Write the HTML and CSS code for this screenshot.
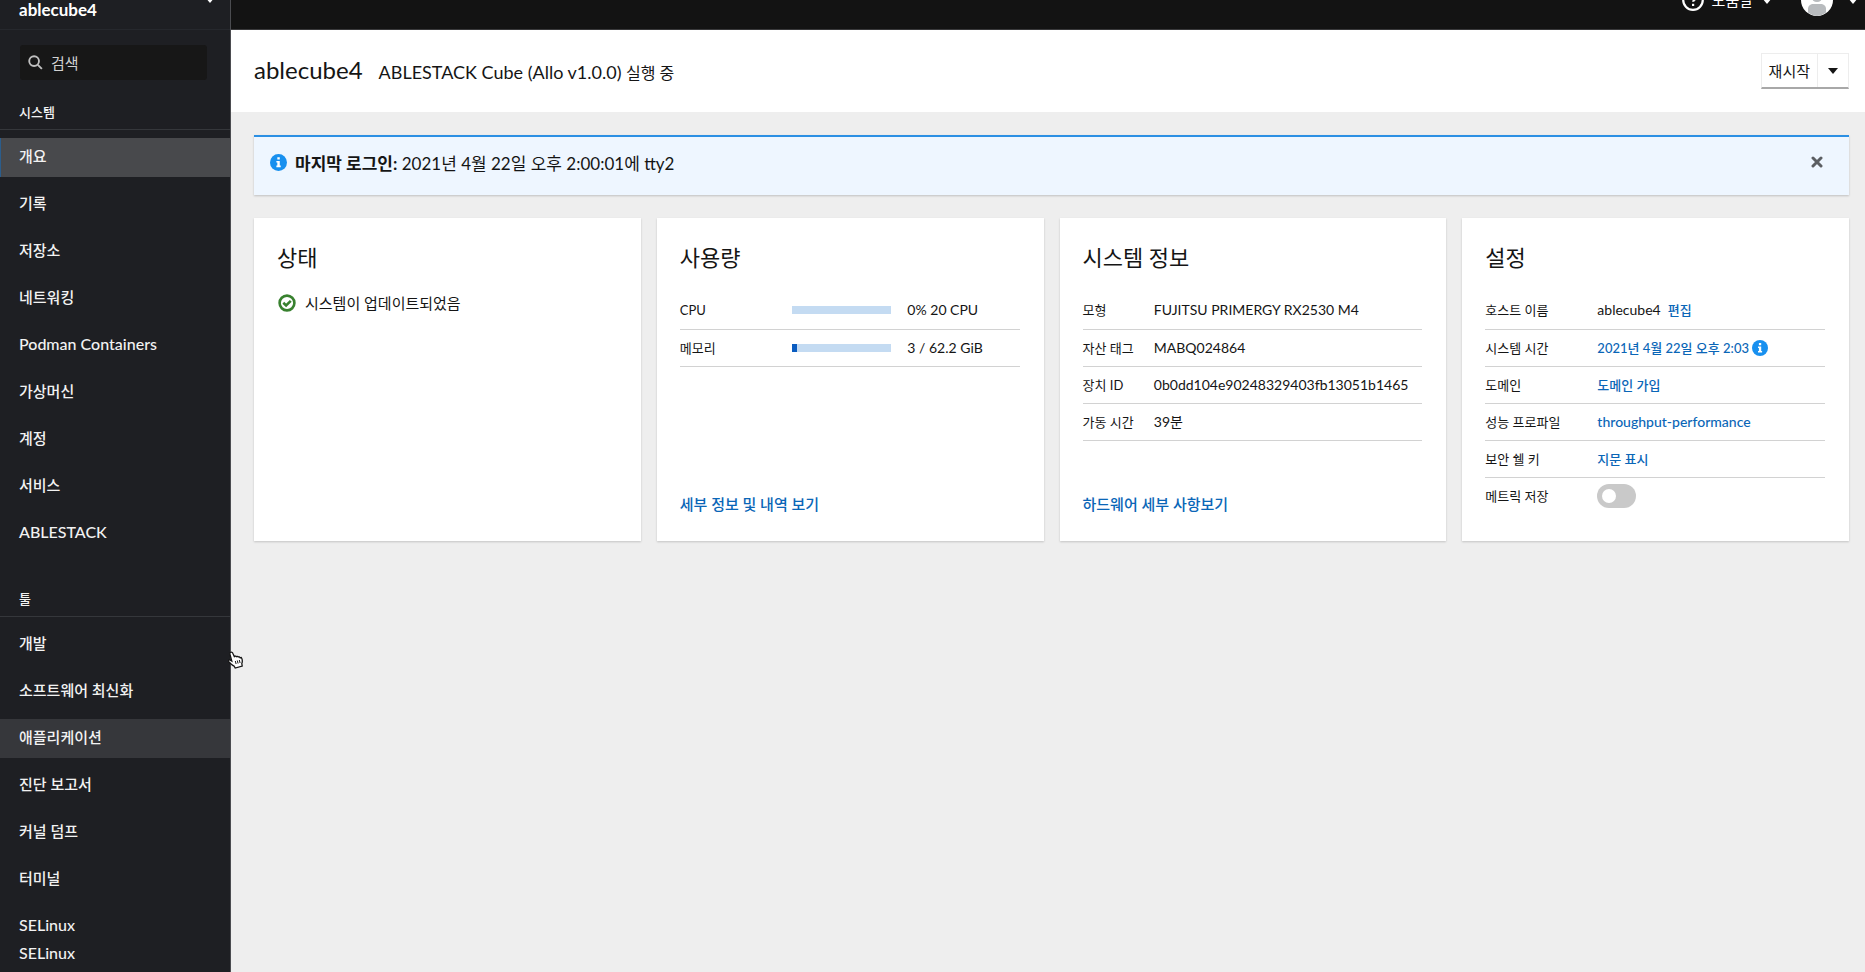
FILE: index.html
```html
<!DOCTYPE html>
<html lang="ko">
<head>
<meta charset="utf-8">
<title>개요 - ablecube4</title>
<link rel="stylesheet" href="styles.css">
</head>
<body>
<div class="page">
  <aside class="sidebar">
    <button class="host" type="button">
      <span>ablecube4</span>
      <svg class="caret host-caret" viewBox="0 0 10 6"><path d="M0 0h10L5 6z"/></svg>
    </button>
    <label class="search">
      <svg class="search-icon" viewBox="0 0 16 16"><circle cx="6.5" cy="6.5" r="5.2"/><path d="M10.5 10.5l4.3 4.3"/></svg>
      <input type="text" placeholder="검색" aria-label="검색">
    </label>
    <nav>
      <h2 class="nav-title">시스템</h2>
      <ul class="nav-list">
        <li><a class="nav-link current" href="#">개요</a></li>
        <li><a class="nav-link" href="#">기록</a></li>
        <li><a class="nav-link" href="#">저장소</a></li>
        <li><a class="nav-link" href="#">네트워킹</a></li>
        <li><a class="nav-link latin" href="#">Podman Containers</a></li>
        <li><a class="nav-link" href="#">가상머신</a></li>
        <li><a class="nav-link" href="#">계정</a></li>
        <li><a class="nav-link" href="#">서비스</a></li>
        <li><a class="nav-link latin" href="#">ABLESTACK</a></li>
      </ul>
      <h2 class="nav-title">툴</h2>
      <ul class="nav-list">
        <li><a class="nav-link" href="#">개발</a></li>
        <li><a class="nav-link" href="#">소프트웨어 최신화</a></li>
        <li><a class="nav-link hovered" href="#">애플리케이션</a></li>
        <li><a class="nav-link" href="#">진단 보고서</a></li>
        <li><a class="nav-link" href="#">커널 덤프</a></li>
        <li><a class="nav-link" href="#">터미널</a></li>
        <li><a class="nav-link latin" href="#">SELinux</a></li>
        <li><a class="nav-link latin compact" href="#">SELinux</a></li>
      </ul>
    </nav>
  </aside>

  <div class="content">
    <header class="topbar">
      <button class="top-button" type="button">
        <svg class="help-icon" viewBox="0 0 22 22"><circle cx="11" cy="11" r="9.8"/><path d="M7.8 8.4c.3-2 1.600-3 3.400-3 1.900 0 3.200 1.100 3.200 2.700 0 2.300-3.200 2.300-3.200 4.700"/><path d="M11.100 14.800v2.200"/></svg>
        <span>도움말</span>
        <svg class="caret" viewBox="0 0 10 6"><path d="M0 0h10L5 6z"/></svg>
      </button>
      <button class="top-button" type="button" aria-label="사용자">
        <svg class="avatar" viewBox="0 0 32 32"><circle cx="16" cy="16" r="16" fill="#fff"/><circle cx="16" cy="12.500" r="5.500" fill="#b8bbbe"/><path d="M7 28.500V25c0-3.500 2.500-5 5.500-5h7c3 0 5.500 1.500 5.500 5v3.500A16 16 0 0 1 16 32a16 16 0 0 1-9-3.500z" fill="#b8bbbe"/></svg>
        <svg class="caret avatar-caret" viewBox="0 0 10 6"><path d="M0 0h10L5 6z"/></svg>
      </button>
    </header>

    <div class="heading">
      <div class="titles">
        <h1>ablecube4</h1>
        <p>ABLESTACK Cube (Allo v1.0.0) <span class="state">실행 중</span></p>
      </div>
      <div class="split">
        <button class="restart" type="button">재시작</button>
        <button class="toggle" type="button" aria-label="전원 옵션"><svg class="caret small" viewBox="0 0 10 6"><path d="M0 0h10L5 6z"/></svg></button>
      </div>
    </div>

    <main>
      <section class="alert">
        <svg class="info" viewBox="0 0 16 16"><circle cx="8" cy="8" r="8" fill="#1890ef"/><path d="M6.900 3h2.300v2.200H6.900zM6 6.500h3.200v4.400h.9v1.500H6v-1.500h.9V8H6z" fill="#fff"/></svg>
        <p><strong>마지막 로그인:</strong> 2021년 4월 22일 오후 2:00:01에 tty2</p>
        <button class="close" type="button" aria-label="닫기"><svg viewBox="0 0 12 12"><path d="M2 2l8 8M10 2l-8 8"/></svg></button>
      </section>

      <div class="cards">
        <section class="card">
          <h2>상태</h2>
          <p class="health">
            <svg class="check" viewBox="0 0 18 18"><circle cx="9" cy="9" r="7.400"/><path d="M5.300 8.800l2.800 2.700 4.700-4.600"/></svg>
            <span>시스템이 업데이트되었음</span>
          </p>
        </section>

        <section class="card">
          <h2>사용량</h2>
          <table class="thirds">
            <tr><th scope="row">CPU</th><td><div class="bar"><div class="fill" style="width:0%"></div></div></td><td>0% 20 CPU</td></tr>
            <tr><th scope="row">메모리</th><td><div class="bar"><div class="fill" style="width:4.8%"></div></div></td><td>3 / 62.2 GiB</td></tr>
          </table>
          <a class="more" href="#">세부 정보 및 내역 보기</a>
        </section>

        <section class="card">
          <h2>시스템 정보</h2>
          <table class="narrow">
            <tr><th scope="row">모형</th><td>FUJITSU PRIMERGY RX2530 M4</td></tr>
            <tr><th scope="row">자산 태그</th><td>MABQ024864</td></tr>
            <tr><th scope="row">장치 ID</th><td>0b0dd104e90248329403fb13051b1465</td></tr>
            <tr><th scope="row">가동 시간</th><td>39분</td></tr>
          </table>
          <a class="more" href="#">하드웨어 세부 사항보기</a>
        </section>

        <section class="card">
          <h2>설정</h2>
          <table class="thirds last-open">
            <tr><th scope="row">호스트 이름</th><td><span class="host-name">ablecube4</span><a href="#">편집</a></td></tr>
            <tr><th scope="row">시스템 시간</th><td><div class="time"><a href="#">2021년 4월 22일 오후 2:03</a><svg class="info" viewBox="0 0 16 16"><circle cx="8" cy="8" r="8" fill="#1890ef"/><path d="M6.900 3h2.300v2.200H6.900zM6 6.500h3.200v4.400h.9v1.500H6v-1.500h.9V8H6z" fill="#fff"/></svg></div></td></tr>
            <tr><th scope="row">도메인</th><td><a href="#">도메인 가입</a></td></tr>
            <tr><th scope="row">성능 프로파일</th><td><a class="profile" href="#">throughput-performance</a></td></tr>
            <tr><th scope="row">보안 쉘 키</th><td><a href="#">지문 표시</a></td></tr>
            <tr><th scope="row"><label for="metrics">메트릭 저장</label></th><td><input class="switch" id="metrics" type="checkbox"></td></tr>
          </table>
        </section>
      </div>
    </main>
  </div>
</div>
<svg class="pointer" viewBox="0 0 16 18"><path d="M2.500 1.500c1-.8 1.900-.2 2.300.8l1.500 3.200c.6-.7 1.500-.6 2 .1.700-.5 1.500-.3 1.900.4.800-.4 1.500 0 1.900.8l1.200-.3c1 1.600 1.300 4 .5 6l.4 2.500-7 2-1-1.800c-1.800-.7-3.800-2.800-5.400-4.600-.9-1.200.4-2.100 1.500-1.500l1.500.9L2 3.500c-.3-.8-.2-1.500.5-2z"/><path class="fingers" d="M7.300 10l.8 3M9.300 9.500l.8 3M11.300 9l.8 3"/></svg>
</body>
</html>
```

FILE: styles.css
```css
* { box-sizing: border-box; }

body {
  margin: 0;
  font-family: Lato, "Noto Sans CJK KR", sans-serif;
  font-size: 15px;
  line-height: 24px;
  color: #151515;
  background: #eeeeee;
  overflow: hidden;
}

h1, h2, p, ul { margin: 0; padding: 0; font-weight: 400; }
ul { list-style: none; }
button { font: inherit; color: inherit; border: 0; background: none; padding: 0; }
a { color: #0a66b7; text-decoration: none; font-weight: 500; }
svg { display: block; flex: none; }

.page { display: flex; height: 100vh; }

.sidebar {
  flex: none;
  width: 231px;
  overflow: hidden;
  background: #1e1f23;
  border-right: 1px solid #4b4c50;
  color: #f2f2f2;
}
.host {
  display: flex;
  align-items: flex-start;
  justify-content: space-between;
  width: 100%;
  height: 30px;
  padding: 0 14px 0 19px;
  border-bottom: 1px solid #26282d;
  font-size: 17px;
  line-height: 20px;
  font-weight: 700;
  color: #fff;
}
.caret { width: 12px; height: 7px; fill: currentColor; }
.caret.small { width: 10px; height: 6px; }
.host-caret { margin-top: -4px; }

.search {
  display: flex;
  align-items: center;
  gap: 8px;
  height: 35px;
  margin: 15px 23px 0 20px;
  padding: 0 8px;
  border-radius: 3px;
  background: #171717;
}
.search-icon { width: 15px; height: 15px; fill: none; stroke: #c0c0c0; stroke-width: 2; }
.search input {
  flex: 1;
  min-width: 0;
  border: 0;
  padding: 0;
  background: none;
  font: inherit;
  color: #d2d2d2;
}
.search input::placeholder { color: #d2d2d2; opacity: 1; }

.nav-title {
  margin-top: 20px;
  padding: 0 19px 5px;
  border-bottom: 1px solid #35373b;
  font-size: 13px;
  font-weight: 500;
}
.nav-list { display: flex; flex-direction: column; gap: 8px; padding-top: 8px; }
.nav-list + .nav-title { margin-top: 34px; }
.nav-link { display: block; padding: 6px 19px 9px; font-weight: 500; color: #f2f2f2; }
.nav-link.latin { font-size: 16px; }
.nav-link.current { background: #48494c; border-left: 1px solid #2b5d8c; padding-left: 18px; }
.nav-link.hovered { background: #36373b; }
.nav-link.compact { padding: 0 19px; margin-top: -13px; }

.content { flex: 1; min-width: 0; }
.topbar {
  display: flex;
  align-items: flex-start;
  justify-content: flex-end;
  gap: 28px;
  height: 30px;
  padding-right: 6px;
  background: #131313;
  border-bottom: 1px solid #39393b;
  color: #fff;
}
.top-button { display: flex; align-items: center; gap: 8px; height: 32px; margin-top: -16px; }
.help-icon { width: 22px; height: 22px; fill: none; stroke: #fff; stroke-width: 2.200; }
.avatar { width: 32px; height: 32px; }
.avatar-caret { margin-left: 6px; }

.heading {
  display: flex;
  align-items: center;
  justify-content: space-between;
  height: 82px;
  padding: 0 16px 0 23px;
  background: #fff;
}
.titles { display: flex; align-items: baseline; gap: 16px; }
.heading h1 { font-size: 24px; }
.heading p { font-size: 18px; }
.state { font-size: 16px; }
.split {
  display: flex;
  height: 36px;
  border: 1px solid #ededed;
  border-bottom: 2px solid #a8a8a8;
}
.restart { padding: 0 7px; }
.toggle { padding: 0 10px; border-left: 1px solid #ededed; }

main { padding: 23px 16px 24px 23px; }
.alert {
  display: flex;
  gap: 8px;
  height: 60px;
  padding: 15px 26px 0 16px;
  background: #eef6ff;
  border-top: 2px solid #2b8fe3;
  box-shadow: 0 1px 2px rgba(3, 3, 3, 0.200);
  font-size: 17px;
}
.info { width: 16px; height: 16px; }
.alert .info { width: 17px; height: 17px; margin-top: 2px; }
.close { width: 12px; height: 20px; margin-left: auto; }
.close svg { width: 12px; height: 12px; stroke: #5b5e62; stroke-width: 3; stroke-linecap: round; }

.cards {
  display: grid;
  grid-template-columns: repeat(4, minmax(0, 1fr));
  gap: 16px;
  margin-top: 23px;
}
.card {
  display: flex;
  flex-direction: column;
  min-height: 323px;
  padding: 24px 24px 24px 23px;
  background: #fff;
  box-shadow: 0 1px 2px rgba(3, 3, 3, 0.180);
}
.card h2 { font-size: 22px; line-height: 32px; }
.health { display: flex; align-items: center; gap: 9px; margin-top: 17px; padding-left: 1px; }
.check { width: 18px; height: 18px; fill: none; stroke: #38812f; stroke-width: 2.600; }

table { width: 100%; margin-top: 18px; border-collapse: collapse; table-layout: fixed; font-size: 14px; }
th, td { height: 37px; padding: 0; border-bottom: 1px solid #d2d2d2; text-align: left; font-weight: 400; white-space: nowrap; }
th { font-size: 13px; }
.thirds th { width: 33%; }
.narrow th { width: 21%; }
.thirds td:nth-child(2):not(:last-child) { width: 34%; }
.last-open tr:last-child > * { border-bottom: 0; }
.bar { height: 8px; margin-right: 16px; background: #c4dbf2; }
.fill { height: 100%; background: #0a5cc0; }
.more { margin-top: auto; line-height: 26px; }
.host-name { margin-right: 7px; }
.time { display: flex; align-items: center; gap: 3px; }
td a { font-size: 13px; }
td .profile { font-size: 14px; }

.switch {
  display: block;
  appearance: none;
  width: 39px;
  height: 24px;
  margin: 0;
  padding: 5px;
  border-radius: 12px;
  background: #c9c9c9;
}
.switch::before { content: ""; display: block; width: 14px; height: 14px; border-radius: 50%; background: #fff; }
.switch:checked { background: #0a5cc0; }

.pointer {
  position: absolute;
  left: 228px;
  top: 651px;
  width: 16px;
  height: 18px;
  fill: #fff;
  stroke: #151515;
  stroke-width: 1.300;
}
.fingers { fill: none; stroke-width: 1; }
```
